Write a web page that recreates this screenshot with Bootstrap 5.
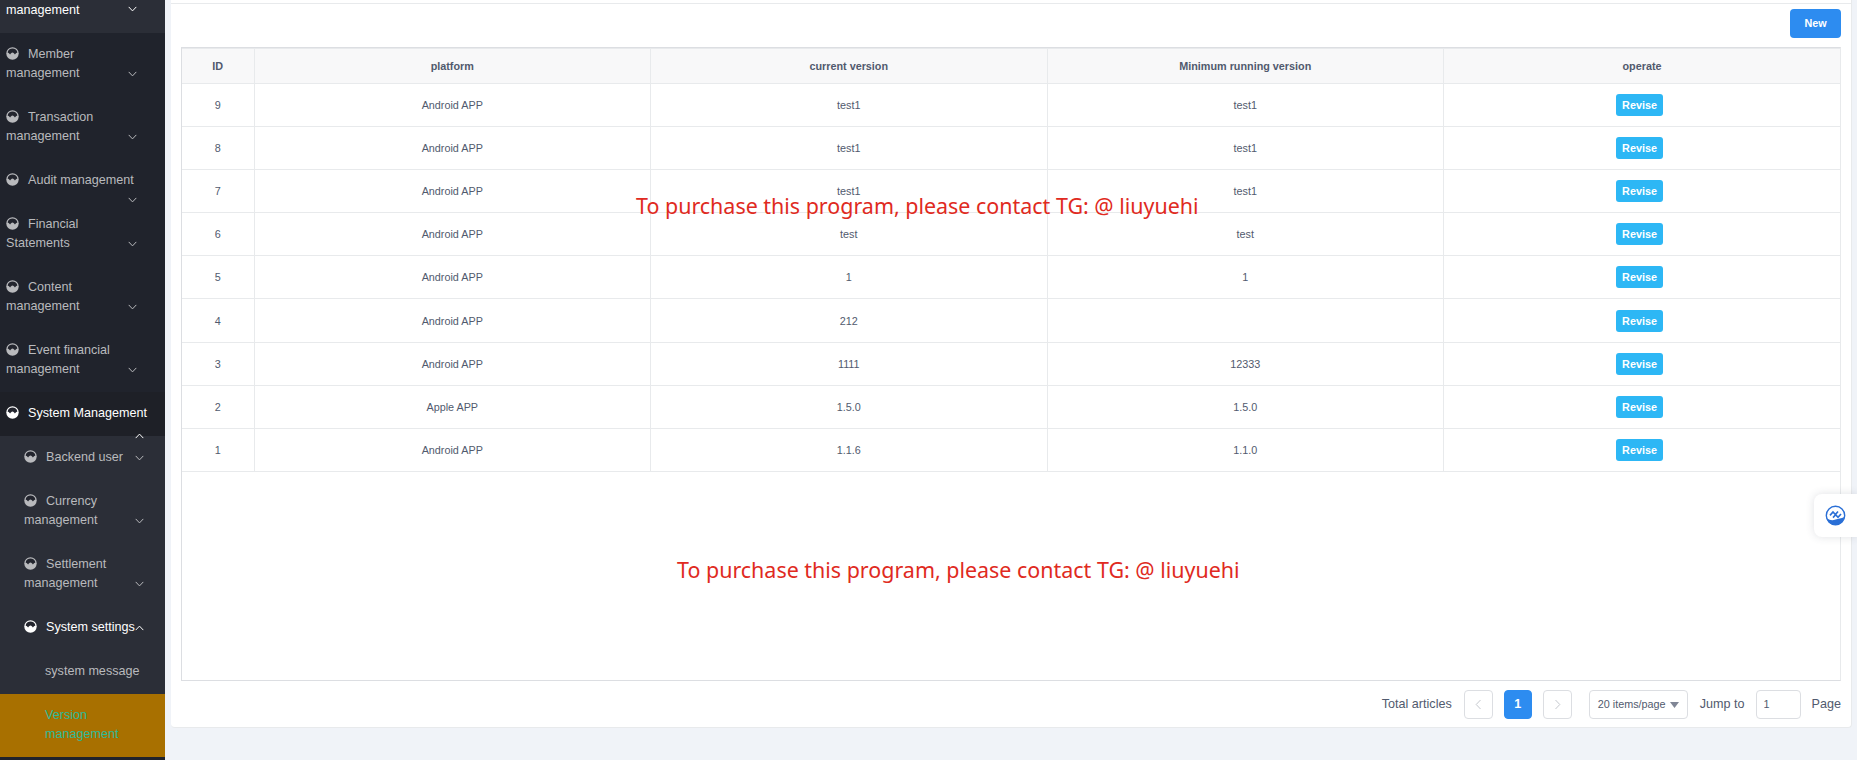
<!DOCTYPE html>
<html lang="en">
<head>
    <meta charset="UTF-8">
    <meta name="viewport" content="width=device-width, initial-scale=1.0">
    <title>Version management</title>
    <link rel="stylesheet" href="https://cdn.jsdelivr.net/npm/bootstrap@5.3.0/dist/css/bootstrap.min.css">
    <style>
        html, body { height: 760px; overflow: hidden; }
        body { background: #f0f3f8; font-family: "Liberation Sans", Arial, sans-serif; color: #515a6e; }
        .page-wrap { height: 760px; }

        /* sidebar */
        .side-menu { width: 165px; flex: none; height: 760px; overflow: hidden; background: #20232c; }
        .menu-item { position: relative; padding: 12px 15px 13px 6px; font-size: 12.6px; line-height: 19px; color: #b9babd; }
        .menu-item.cut-top { height: 33px; padding-top: 1px; padding-bottom: 0; background: #2b2e37; color: #fff; }
        .menu-item.is-open { background: #1e2027; color: #fff; }
        .menu-item.is-sub { padding-left: 24px; }
        .menu-item.is-leaf { padding-left: 45px; }
        .sub-menu { background: #2b2e37; }
        .menu-item.is-on { color: #fff; }
        .menu-item.is-active { background: #a87000; color: #2dbb9a; }
        .menu-dot { width: 13px; height: 13px; margin-right: 9px; vertical-align: -2px; }
        .menu-chev { position: absolute; top: 38px; left: 128px; width: 9px; height: 6px; }
        .menu-chev.one-line { top: 19px; left: 135px; }
        .menu-chev.sub-pos { left: 135px; }
        .menu-chev.up-main { top: 41px; left: 135px; }
        .menu-chev.top-pos { top: 6px; left: 128px; }

        /* main card */
        .main-card { width: 1681px; height: 728px; margin-left: 6px; padding: 3px 10px 0; position: relative; background: #fff; border-right: 1px solid #e8eaec; border-bottom: 1px solid #e8eaec; border-radius: 0 0 4px 4px; }
        .top-line { height: 1px; margin: 0 -10px; background: #e8eaec; }
        .tool-row { height: 43px; padding-top: 5px; }
        .btn-new { width: 51px; height: 29px; padding: 0; border: 0; border-radius: 4px; background: #2d8cf0; color: #fff; font-size: 10.8px; font-weight: 700; }
        .table-frame { height: 634px; border: 1px solid #dcdee2; border-right-color: #e8eaec; }
        .ver-table { table-layout: fixed; margin: 0; font-size: 10.8px; color: #515a6e; --bs-table-border-color: #e8eaec; --bs-table-color: #515a6e; }
        .ver-table > :not(caption) > * > * { padding: 0; text-align: center; vertical-align: middle; line-height: 14px; }
        .ver-table tr { border-color: #e8eaec; }
        .ver-table th { height: 35px; background: #f8f8f9; --bs-table-bg: #f8f8f9; font-weight: 700; border-top: 0; }
        .ver-table td { height: 43.1px; }
        .ver-table tr > :first-child { border-left: 0; }
        .ver-table tr > :last-child { border-right: 0; }
        .col-id { width: 72px; }
        .col-wide { width: 396.5px; }
        .btn-revise { width: 47px; height: 22px; padding: 0; margin-right: 5px; border: 0; border-radius: 3px; background: #2db7f5; color: #fff; font-size: 10.8px; font-weight: 700; }

        /* pager */
        .pager-row { height: 29px; margin-top: 9px; font-size: 12.6px; line-height: 29px; }
        .pager-total { margin-right: 12px; line-height: 28px; }
        .pager-btn { width: 29px; height: 29px; padding: 0; border: 1px solid #dcdee2; border-radius: 4px; background: #fff; display: flex; align-items: center; justify-content: center; }
        .pager-btn.cur { width: 28px; margin: 0 11px; border-color: #2d8cf0; background: #2d8cf0; color: #fff; font-weight: 700; font-size: 12.6px; }
        .pager-size { width: 99px; height: 29px; margin-left: 17px; padding: 0 8px; border: 1px solid #dcdee2; border-radius: 4px; font-size: 10.8px; }
        .pager-jump { margin-left: 12px; }
        .pager-input { width: 45px; height: 29px; margin: 0 11px; padding: 0 7px; border: 1px solid #dcdee2; border-radius: 4px; font-size: 10.8px; color: #515a6e; }

        /* overlays */
        .promo-note { position: absolute; color: #e02a21; font-family: "Noto Sans", sans-serif; font-size: 21.45px; line-height: 28px; white-space: nowrap; }
        .promo-a { left: 465px; top: 192px; }
        .promo-b { left: 506px; top: 556px; }
        .float-tool { position: fixed; left: 1814px; top: 494px; width: 43px; height: 43px; background: #fff; border-radius: 8px 0 0 8px; box-shadow: 0 0 8px rgba(60, 70, 90, .16); display: flex; align-items: center; padding-left: 11px; }
    </style>
</head>
<body>
    <svg width="0" height="0" class="position-absolute">
        <defs>
            <symbol id="dot" viewBox="0 0 13 13">
                <circle cx="6.5" cy="6.5" r="6.2" fill="currentColor"/>
                <path d="M1.6 5.6C2 3 4 1.5 6.5 1.5S11 3 11.4 5.6C10.3 5.9 9.6 6.6 8.9 7.4 8.3 6.7 7.5 5.6 6.5 5.6S4.7 6.7 4.1 7.4C3.4 6.6 2.7 5.9 1.6 5.6Z" fill="#23252e"/>
            </symbol>
            <symbol id="down" viewBox="0 0 9 6">
                <path d="M.7.9 4.5 4.9 8.3.9" fill="none" stroke="currentColor" stroke-width="1"/>
            </symbol>
            <symbol id="up" viewBox="0 0 9 6">
                <path d="M.7 5.1 4.5 1.1 8.3 5.1" fill="none" stroke="currentColor" stroke-width="1"/>
            </symbol>
        </defs>
    </svg>

    <div class="d-flex page-wrap">
        <!-- Sidebar -->
        <div class="side-menu">
            <div class="menu-item cut-top">management<svg class="menu-chev top-pos"><use href="#down"/></svg></div>
            <div class="menu-item"><svg class="menu-dot"><use href="#dot"/></svg>Member management<svg class="menu-chev"><use href="#down"/></svg></div>
            <div class="menu-item"><svg class="menu-dot"><use href="#dot"/></svg>Transaction management<svg class="menu-chev"><use href="#down"/></svg></div>
            <div class="menu-item"><svg class="menu-dot"><use href="#dot"/></svg>Audit management<svg class="menu-chev"><use href="#down"/></svg></div>
            <div class="menu-item"><svg class="menu-dot"><use href="#dot"/></svg>Financial<br>Statements<svg class="menu-chev"><use href="#down"/></svg></div>
            <div class="menu-item"><svg class="menu-dot"><use href="#dot"/></svg>Content<br>management<svg class="menu-chev"><use href="#down"/></svg></div>
            <div class="menu-item"><svg class="menu-dot"><use href="#dot"/></svg>Event financial management<svg class="menu-chev"><use href="#down"/></svg></div>
            <div class="menu-item is-open"><svg class="menu-dot"><use href="#dot"/></svg>System Management<svg class="menu-chev up-main"><use href="#up"/></svg></div>
            <div class="sub-menu">
                <div class="menu-item is-sub"><svg class="menu-dot"><use href="#dot"/></svg>Backend user<svg class="menu-chev one-line"><use href="#down"/></svg></div>
                <div class="menu-item is-sub"><svg class="menu-dot"><use href="#dot"/></svg>Currency management<svg class="menu-chev sub-pos"><use href="#down"/></svg></div>
                <div class="menu-item is-sub"><svg class="menu-dot"><use href="#dot"/></svg>Settlement management<svg class="menu-chev sub-pos"><use href="#down"/></svg></div>
                <div class="menu-item is-sub is-on"><svg class="menu-dot"><use href="#dot"/></svg>System settings<svg class="menu-chev one-line"><use href="#up"/></svg></div>
                <div class="menu-item is-leaf">system message</div>
                <div class="menu-item is-leaf is-active">Version management</div>
            </div>
        </div>

        <!-- Main -->
        <div class="main-card">
            <div class="top-line"></div>
            <div class="tool-row d-flex justify-content-end">
                <button class="btn-new" type="button">New</button>
            </div>
            <div class="table-frame">
                <table class="table table-bordered ver-table">
                    <colgroup>
                        <col class="col-id"><col class="col-wide"><col class="col-wide"><col class="col-wide"><col>
                    </colgroup>
                    <thead>
                        <tr><th>ID</th><th>platform</th><th>current version</th><th>Minimum running version</th><th>operate</th></tr>
                    </thead>
                    <tbody id="rows"></tbody>
                </table>
            </div>
            <div class="pager-row d-flex justify-content-end">
                <span class="pager-total">Total articles</span>
                <span class="pager-btn"><svg width="7" height="11" viewBox="0 0 7 11"><path d="M5.5 1 1.2 5.5 5.5 10" fill="none" stroke="#c5c8ce"/></svg></span>
                <span class="pager-btn cur">1</span>
                <span class="pager-btn"><svg width="7" height="11" viewBox="0 0 7 11"><path d="M1.5 1 5.8 5.5 1.5 10" fill="none" stroke="#c5c8ce"/></svg></span>
                <div class="pager-size d-flex align-items-center justify-content-between">
                    <span>20 items/page</span>
                    <svg width="9" height="6" viewBox="0 0 9 6"><path d="M0 0H9L4.5 6Z" fill="#808695"/></svg>
                </div>
                <span class="pager-jump">Jump to</span>
                <input class="pager-input" type="text" value="1">
                <span>Page</span>
            </div>
            <div class="promo-note promo-a">To purchase this program, please contact TG: @ liuyuehi</div>
            <div class="promo-note promo-b">To purchase this program, please contact TG: @ liuyuehi</div>
        </div>
    </div>

    <div class="float-tool">
        <svg width="21" height="21" viewBox="0 0 21 21">
            <circle cx="10.5" cy="10.5" r="9.2" fill="none" stroke="#2a6fd6" stroke-width="1.4"/>
            <path d="M1.6 13C5 15.6 7.6 15.4 10.5 14.6S16 13.6 19.4 12C18.4 17 14.8 20 10.5 20 6 20 2.8 17.4 1.6 13Z" fill="#2a6fd6"/>
            <path d="M5 10.4 8 7 10.4 9.6 13 6.4M8 12.6 10.6 9.8 13 12.4 16 9" fill="none" stroke="#2a6fd6" stroke-width="1.6"/>
        </svg>
    </div>

    <script>
        const data = [
            [9, "Android APP", "test1", "test1"],
            [8, "Android APP", "test1", "test1"],
            [7, "Android APP", "test1", "test1"],
            [6, "Android APP", "test", "test"],
            [5, "Android APP", "1", "1"],
            [4, "Android APP", "212", ""],
            [3, "Android APP", "1111", "12333"],
            [2, "Apple APP", "1.5.0", "1.5.0"],
            [1, "Android APP", "1.1.6", "1.1.0"]
        ];
        document.getElementById("rows").innerHTML = data.map(r =>
            `<tr><td>${r[0]}</td><td>${r[1]}</td><td>${r[2]}</td><td>${r[3]}</td><td><button class="btn-revise" type="button">Revise</button></td></tr>`
        ).join("");
    </script>
    <script src="https://cdn.jsdelivr.net/npm/bootstrap@5.3.0/dist/js/bootstrap.bundle.min.js"></script>
</body>
</html>
